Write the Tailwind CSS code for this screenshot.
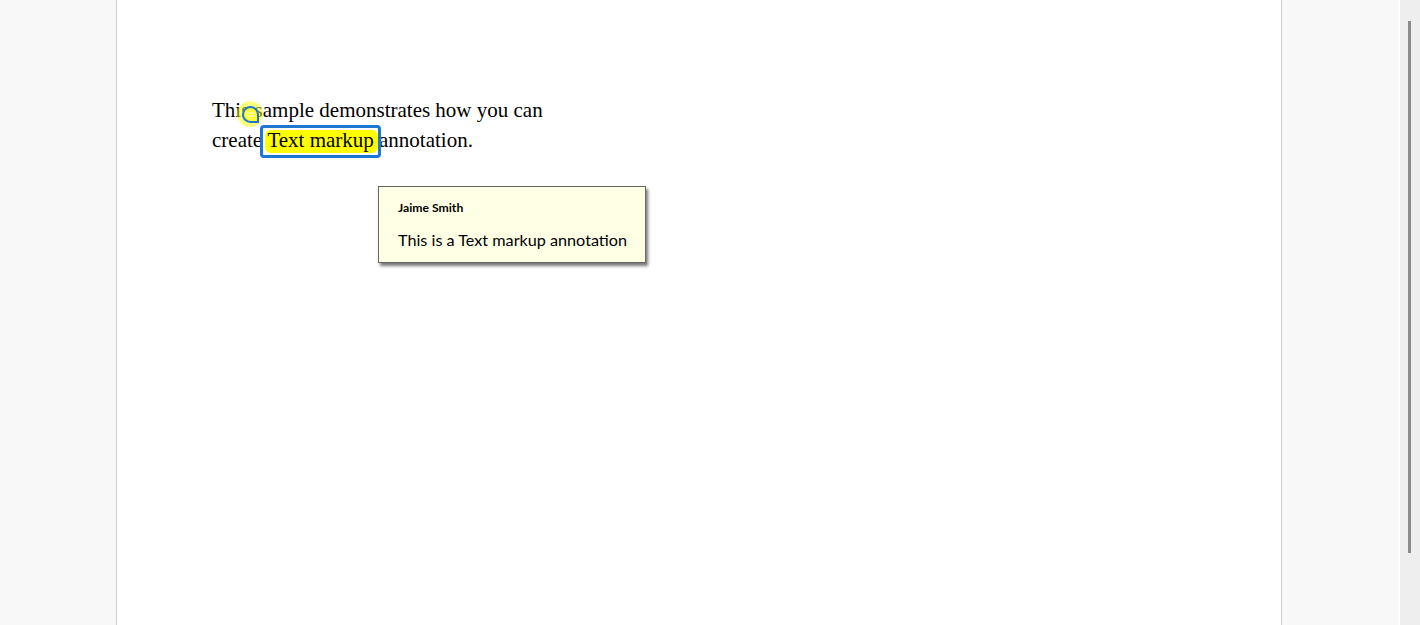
<!DOCTYPE html>
<html lang="en">
  <head>
    <meta charset="UTF-8" />
    <script src="https://cdn.jsdelivr.net/npm/@tailwindcss/browser@4"></script>
    <title>Text markup annotation</title>
  </head>
  <body class="h-[625px] overflow-hidden bg-[#f8f8f8]">
    <div class="flex h-[625px]">
      <!-- viewer area -->
      <div class="flex-1 pl-[116px] pr-[117px]">
        <!-- page -->
        <div class="relative h-[625px] border-x border-[#cdcdcd] bg-white pl-[95px] pt-[95px]">
          <p class="font-['Liberation_Serif',serif] text-[21px] leading-[30px] text-black whitespace-nowrap">This sample demonstrates how you can</p>
          <p class="font-['Liberation_Serif',serif] text-[21px] leading-[30px] text-black whitespace-nowrap">create <span class="relative"><span class="absolute left-[-2px] right-[-4px] top-[2px] h-[23px] rounded-[6px] bg-[#ffff00]"></span><span class="absolute left-[-7px] right-[-7px] top-[-3px] h-[33px] rounded-[4px] border-[3px] border-[#1c76d2]"></span><span class="relative">Text markup</span></span> annotation.</p>

          <!-- comment marker -->
          <div class="absolute left-[120px] top-[101px] flex h-[26px] w-[26px] items-center justify-center rounded-full bg-[#ffff00]/50">
            <div class="flex h-[17px] w-[17px] items-center justify-center rounded-full rounded-br-[7px] border-[2px] border-[#1c76d2] bg-[#ffff33]">
              <svg class="h-[5px] w-[7px]" viewBox="0 0 7 5"><path d="M0 1h7M0 4h7" stroke="#fff" stroke-width="1"/></svg>
            </div>
          </div>

          <!-- popup -->
          <div class="absolute left-[261px] top-[186px] h-[77px] w-[268px] border border-[#666] bg-[#ffffe6] pl-[19px] pt-[12px] font-['Lato',sans-serif] text-black shadow-[2px_3px_3px_#777]">
            <div class="text-[12.2px] font-bold leading-[18px]">Jaime Smith</div>
            <div class="mt-[12px] whitespace-nowrap text-[16.2px] leading-[22px]">This is a Text markup annotation</div>
          </div>
        </div>
      </div>
      <!-- scrollbar -->
      <div class="w-[21px] border-l border-white bg-[#eeeeee] pt-[21px] pl-[8px]">
        <div class="h-[532px] w-[3px] bg-[#8b8b8b]"></div>
      </div>
    </div>
  </body>
</html>
